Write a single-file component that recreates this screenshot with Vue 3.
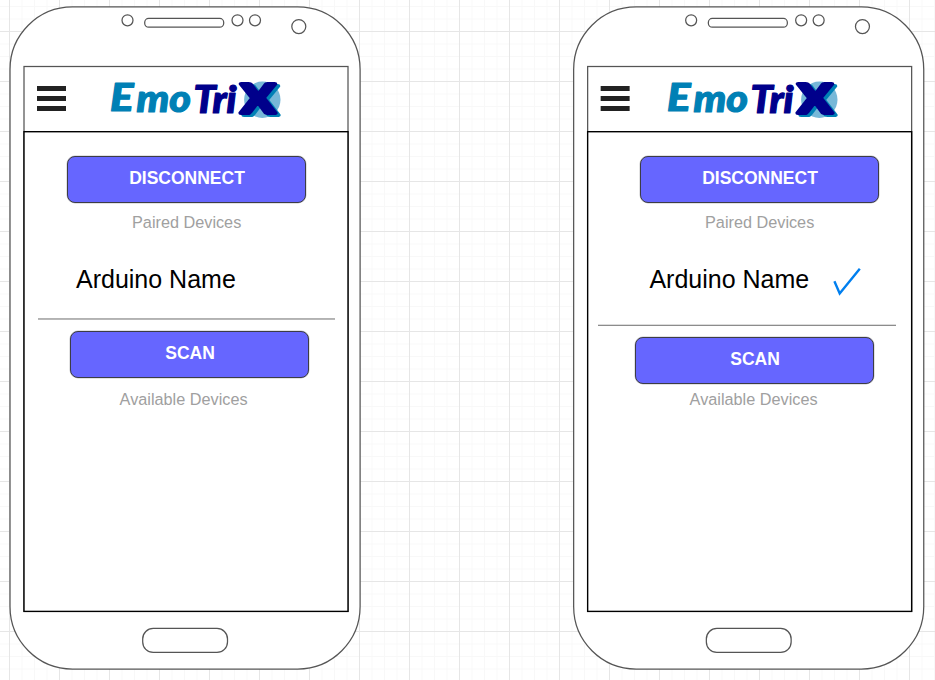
<script setup>
const phones = [
  { id: 'idle', connected: false },
  { id: 'paired', connected: true },
]
</script>

<template>
  <main class="canvas">
    <section v-for="phone in phones" :key="phone.id" class="phone" :class="phone.id">
      <svg class="shell" viewBox="0 0 353 665" aria-hidden="true">
        <g fill="#fff" stroke="#555" stroke-width="1.25">
          <rect x="1" y="0.9" width="350.1" height="662.2" rx="62.5" ry="62.5" />
          <circle cx="118.5" cy="14.3" r="5.5" />
          <rect x="135.7" y="12.4" width="79" height="8.8" rx="4" />
          <circle cx="228.5" cy="14.3" r="5.5" />
          <circle cx="246" cy="14.3" r="5.5" />
          <circle cx="289.8" cy="20.6" r="7" />
          <rect x="15" y="60.5" width="324" height="544.8" />
          <rect x="133.7" y="622.4" width="84.8" height="24" rx="10.5" />
        </g>
        <rect x="15" y="125.7" width="324" height="479.7" fill="#fff" stroke="#000" stroke-width="1.4" />
      </svg>

      <div class="screen">
        <header class="topbar">
          <svg class="menu" viewBox="0 0 30 26" aria-label="Menu">
            <path d="M0 2.6H29M0 12.6H29M0 22.6H29" stroke="#222" stroke-width="5" />
          </svg>
          <svg class="logo" viewBox="110 80 172 40" aria-label="EmoTriX">
            <circle cx="262.3" cy="99.7" r="18.2" fill="#77b8d8" />
            <g class="word light">
              <text x="110" y="111" font-size="37.5" textLength="23.5" lengthAdjust="spacingAndGlyphs">E</text>
              <text x="136.5" y="111.7" font-size="38" textLength="54.5" lengthAdjust="spacingAndGlyphs">mo</text>
            </g>
            <g class="word dark">
              <text x="193.5" y="113" font-size="37" textLength="43" lengthAdjust="spacingAndGlyphs">Tri</text>
            </g>
            <text class="cross" x="241" y="112.5" textLength="34" lengthAdjust="spacingAndGlyphs">X</text>
          </svg>
        </header>

        <div class="content">
          <button class="btn disconnect">DISCONNECT</button>
          <p class="caption paired-label">Paired Devices</p>
          <div class="device">
            <span>Arduino Name</span>
            <svg v-if="phone.connected" class="check" viewBox="0 0 28 30" aria-label="Connected">
              <path d="M1.4 13.3L6.7 25.4L26.8 0.8" fill="none" stroke="#007fef" stroke-width="2.4" />
            </svg>
          </div>
          <div class="divider"></div>
          <button class="btn scan">SCAN</button>
          <p class="caption available-label">Available Devices</p>
        </div>
      </div>
    </section>
  </main>
</template>

<style>
body {
  margin: 0;
  overflow: hidden;
}
</style>

<style scoped>
.canvas {
  box-sizing: border-box;
  width: 935px;
  height: 680px;
  padding: 6px 0 0 9px;
  display: flex;
  gap: 211px;
  overflow: hidden;
  font-family: "Liberation Sans", Arial, sans-serif;
  background-color: #fff;
  background-image:
    linear-gradient(to right, #e6e6e6 1px, transparent 1px),
    linear-gradient(to bottom, #e6e6e6 1px, transparent 1px),
    linear-gradient(to right, #f8f8f8 1px, transparent 1px),
    linear-gradient(to bottom, #f8f8f8 1px, transparent 1px);
  background-size: 50px 50px, 50px 50px, 12.5px 12.5px, 12.5px 12.5px;
  background-position: 9px 0, 0 31px, 9px 0, 0 6px;
}

.phone {
  flex: none;
  width: 353px;
  height: 665px;
  display: grid;
}

.shell,
.screen {
  grid-area: 1 / 1;
}

.shell {
  width: 353px;
  height: 665px;
}

.paired .shell g,
.paired .shell > rect,
.paired .menu path {
  transform: translateX(-0.35px);
}

.screen {
  z-index: 1;
  padding: 61px 14px 0 15px;
}

.topbar {
  height: 65px;
  display: flex;
  align-items: flex-start;
}

.menu {
  width: 30px;
  height: 26px;
  margin: 19px 0 0 13px;
  overflow: visible;
}

.logo {
  width: 172px;
  height: 40px;
  margin: 13px 0 0 43px;
  overflow: visible;
}

.paired .logo {
  margin-left: 36px;
}

.word {
  font-family: Lato, "Liberation Sans", sans-serif;
  font-weight: 900;
  font-style: italic;
  stroke-width: 1.2;
  stroke-linejoin: round;
}

.light {
  fill: #0080b5;
  stroke: #0080b5;
}

.dark {
  fill: #00008b;
  stroke: #00008b;
}

.cross {
  font-family: Lato, "Liberation Sans", sans-serif;
  font-size: 39px;
  font-weight: 900;
  fill: #00008b;
  stroke: #00008b;
  stroke-width: 4;
  stroke-linejoin: round;
  filter: drop-shadow(3.5px 2.5px 0 #0080b5);
}

.content {
  display: flex;
  flex-direction: column;
  align-items: flex-start;
  padding-top: 24px;
}

.btn {
  box-sizing: border-box;
  width: 239px;
  height: 47px;
  padding: 11px 0 0 1px;
  display: flex;
  justify-content: center;
  align-items: flex-start;
  border: 1px solid #3c3c46;
  border-radius: 8px;
  box-shadow: 0 0 0 0.5px rgba(60, 60, 70, 0.3);
  background: #6666ff;
  color: #fff;
  font: bold 17.5px/20px "Liberation Sans", Arial, sans-serif;
}

.disconnect {
  margin-left: 43px;
}

.paired .disconnect {
  margin-left: 52px;
}

.caption {
  margin: 0;
  color: #a0a0a0;
  font-size: 16.25px;
  line-height: 18px;
}

.paired-label {
  margin: 10px 0 0 108px;
}

.paired .paired-label {
  margin-left: 117px;
}

.device {
  display: flex;
  height: 29px;
  margin: 34px 0 0 52px;
  font-size: 25px;
  line-height: 29px;
  color: #000;
}

.paired .device {
  margin-left: 61.4px;
}

.check {
  width: 28px;
  height: 30px;
  margin: 3px 0 0 23.6px;
}

.divider {
  width: 297px;
  height: 1px;
  margin: 24px 0 0 14px;
  background: #b2b2b2;
  border-bottom: 1px solid #b8b8b8;
}

.paired .divider {
  width: 298px;
  margin: 30px 0 0 10px;
  background: #dcdcdc;
  border-bottom-color: #8c8c8c;
}

.scan {
  margin: 11px 0 0 46px;
}

.paired .scan {
  margin-left: 47px;
}

.available-label {
  margin: 12px 0 0 95.6px;
}

.paired .available-label {
  margin: 6px 0 0 101.6px;
}
</style>
